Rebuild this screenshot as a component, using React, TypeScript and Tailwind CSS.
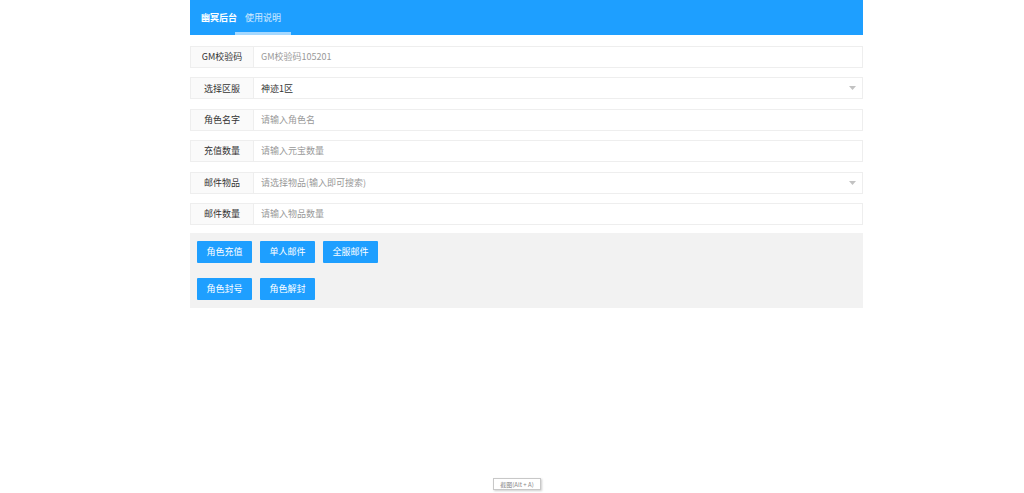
import React from 'react';

const fields = [
  { label: 'GM校验码', value: 'GM校验码105201', muted: true },
  { label: '选择区服', value: '神迹1区', select: true },
  { label: '角色名字', value: '请输入角色名', muted: true },
  { label: '充值数量', value: '请输入元宝数量', muted: true },
  { label: '邮件物品', value: '请选择物品(输入即可搜索)', muted: true, select: true },
  { label: '邮件数量', value: '请输入物品数量', muted: true },
];

const buttonRows = [
  ['角色充值', '单人邮件', '全服邮件'],
  ['角色封号', '角色解封'],
];

const Arrow = () => (
  <svg width="7" height="4" viewBox="0 0 7 4" className="mr-[6px] shrink-0">
    <path d="M0 0 L7 0 L3.5 4 Z" fill="#c2c2c2" />
  </svg>
);

const App: React.FC = () => {
  return (
    <div
      className="relative min-h-[493px] bg-white"
      style={{ fontFamily: '"Noto Sans CJK SC", "Noto Sans", sans-serif' }}
    >
      <div className="ml-[190px] w-[673px]">
        {/* top nav */}
        <div className="flex h-[35px] items-stretch bg-[#1E9FFF] pl-[11px] text-[9px]">
          <div className="flex w-[34px] items-center whitespace-nowrap font-bold text-white">幽冥后台</div>
          <div className="relative flex w-[56px] items-center justify-center text-white/80">
            使用说明
            <span className="absolute bottom-0 left-0 h-[3px] w-full bg-white/60" />
          </div>
        </div>

        {/* form */}
        <div className="mt-[11px] flex flex-col gap-[9.4px]">
          {fields.map((f) => (
            <div key={f.label} className="flex h-[22px] border border-[#eeeeee] bg-white text-[9px]">
              <div className="flex w-[63px] shrink-0 items-center justify-center border-r border-[#eeeeee] bg-[#fafafa] text-[#333]">
                {f.label}
              </div>
              <div className="flex flex-1 items-center justify-between pl-[7px]">
                <span className={f.muted ? 'text-[#999]' : 'text-[#333]'}>{f.value}</span>
                {f.select && <Arrow />}
              </div>
            </div>
          ))}
        </div>

        {/* actions */}
        <div className="mt-[8px] flex flex-col gap-[15px] bg-[#f2f2f2] px-[7px] py-[8px]">
          {buttonRows.map((row, i) => (
            <div key={i} className="flex gap-[8px]">
              {row.map((b) => (
                <button
                  key={b}
                  className="flex h-[22px] w-[55px] items-center justify-center rounded-[1px] bg-[#1E9FFF] text-[9px] text-white"
                >
                  {b}
                </button>
              ))}
            </div>
          ))}
        </div>
      </div>

      {/* screenshot hint tooltip */}
      <div className="absolute left-[493px] top-[478px] flex h-[12px] w-[48px] items-center justify-center border border-[#c8c8c8] bg-white text-[6px] text-[#888] shadow-[1px_1px_2px_rgba(0,0,0,0.2)]">
        截图(Alt + A)
      </div>
    </div>
  );
};

export default App;
